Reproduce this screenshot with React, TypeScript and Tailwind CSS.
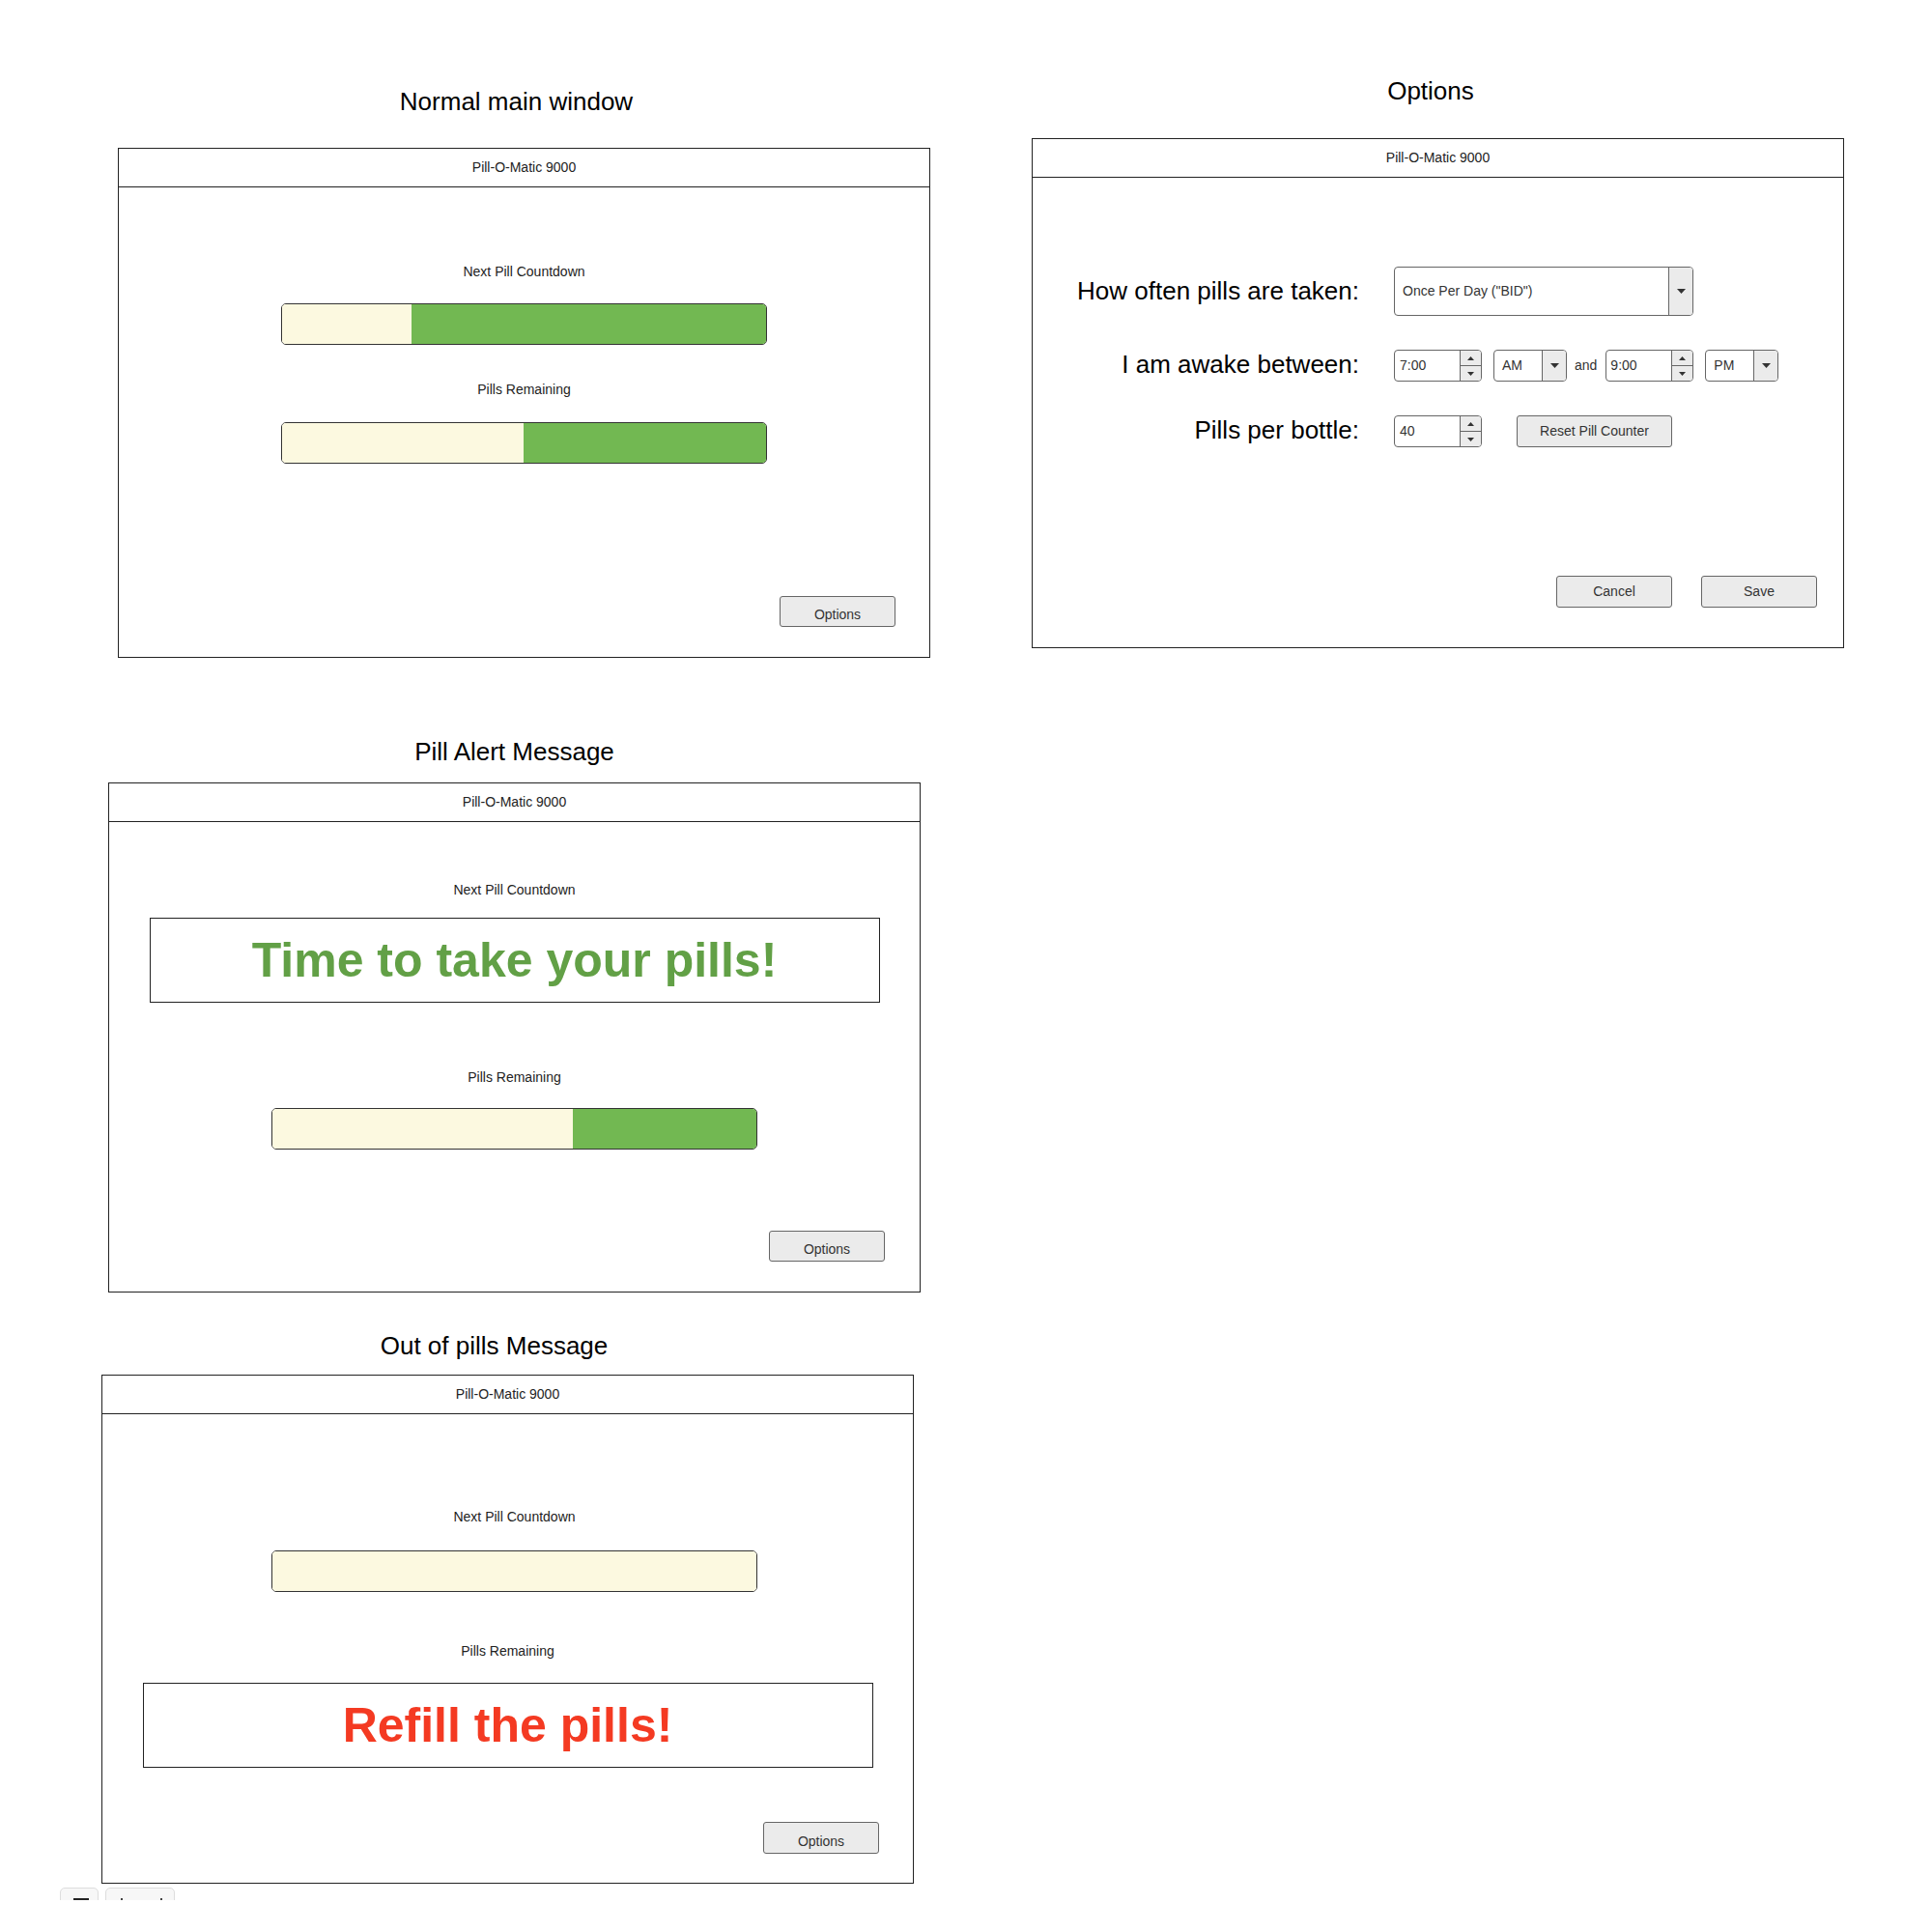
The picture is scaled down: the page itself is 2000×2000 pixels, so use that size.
import React from 'react';

const Tri = ({ up = false, size = 'sm' }: { up?: boolean; size?: 'sm' | 'md' }) => {
  const w = size === 'sm' ? 7 : 9;
  const h = size === 'sm' ? 4 : 5;
  return (
    <svg width={w} height={h} viewBox={`0 0 ${w} ${h}`}>
      <polygon points={up ? `0,${h} ${w},${h} ${w / 2},0` : `0,0 ${w},0 ${w / 2},${h}`} fill="#333" />
    </svg>
  );
};

const Bar = ({ cream, className = '' }: { cream: number; className?: string }) => (
  <div className={`flex h-[43px] w-[503px] overflow-hidden rounded-[5px] border border-[#333] ${className}`}>
    <div className="h-full bg-[#fcf9e0]" style={{ width: `${cream}px` }} />
    <div className="h-full flex-1 bg-[#72b852]" />
  </div>
);

const Label = ({ children, className = '' }: { children: React.ReactNode; className?: string }) => (
  <div className={`h-[20px] text-center text-[14px] leading-[20px] text-[#222] ${className}`}>{children}</div>
);

const Button = ({ children, className = '' }: { children: React.ReactNode; className?: string }) => (
  <div
    className={`flex h-[32px] w-[120px] items-center justify-center rounded-[3px] border border-[#666] bg-[#ebebeb] text-[14px] text-[#333] ${className}`}
  >
    {children}
  </div>
);

const OptionsButton = ({ className = '' }: { className?: string }) => (
  <div
    className={`flex h-[32px] w-[120px] items-center justify-center self-end rounded-[3px] border border-[#666] bg-[#ebebeb] pt-[7px] text-[14px] text-[#333] ${className}`}
  >
    Options
  </div>
);

const Window = ({ children, className = '' }: { children: React.ReactNode; className?: string }) => (
  <div className={`flex w-[841px] flex-col border border-[#222] bg-white ${className}`}>
    <div className="flex h-[40px] shrink-0 items-center justify-center border-b border-[#222] text-[14px] text-[#222]">
      Pill-O-Matic 9000
    </div>
    {children}
  </div>
);

const Title = ({ children, className = '' }: { children: React.ReactNode; className?: string }) => (
  <div className={`h-[30px] w-[841px] text-center text-[26px] leading-[30px] text-black ${className}`}>{children}</div>
);

const Spinner = ({ value, pad = 'pl-[5px]', className = '' }: { value: string; pad?: string; className?: string }) => (
  <div className={`flex h-[32px] w-[91px] overflow-hidden rounded-[4px] border border-[#666] bg-white ${className}`}>
    <div className={`flex flex-1 items-center text-[14px] text-[#333] ${pad}`}>{value}</div>
    <div className="flex w-[22px] flex-col border-l border-[#666] bg-[#ebebeb]">
      <div className="flex flex-1 items-center justify-center border-b border-[#666]">
        <Tri up />
      </div>
      <div className="flex flex-1 items-center justify-center">
        <Tri />
      </div>
    </div>
  </div>
);

const Select = ({ value, className = '' }: { value: string; className?: string }) => (
  <div className={`flex overflow-hidden rounded-[4px] border border-[#666] bg-white ${className}`}>
    <div className="flex flex-1 items-center pl-[8px] text-[14px] text-[#333]">{value}</div>
    <div className="flex w-[25px] items-center justify-center border-l border-[#666] bg-[#ebebeb]">
      <Tri size="md" />
    </div>
  </div>
);

const Message = ({ text, color }: { text: string; color: string }) => (
  <div className="mx-auto flex h-[88px] w-[756px] items-center justify-center border border-[#222]">
    <span className={`text-[50px] font-bold leading-none ${color}`}>{text}</span>
  </div>
);

export default function App() {
  return (
    <div className="flex h-[2000px] w-[2000px] overflow-hidden bg-white font-['Liberation_Sans',Arial,sans-serif]">
      {/* left column: main window and messages */}
      <div className="flex w-[1000px] flex-col pt-[90px]">
        <div className="ml-[122px]">
          <Title className="pr-[16px]">Normal main window</Title>
          <Window className="mt-[33px] h-[528px]">
            <Label className="mt-[77px]">Next Pill Countdown</Label>
            <Bar cream={134} className="mx-auto mt-[23px]" />
            <Label className="mt-[36px]">Pills Remaining</Label>
            <Bar cream={250} className="mx-auto mt-[24px]" />
            <OptionsButton className="mr-[35px] mt-[137px]" />
          </Window>
        </div>

        <div className="ml-[112px] mt-[82px]">
          <Title>Pill Alert Message</Title>
          <Window className="mt-[17px] h-[528px]">
            <Label className="mt-[60px]">Next Pill Countdown</Label>
            <div className="mt-[19px]">
              <Message text="Time to take your pills!" color="text-[#62a046]" />
            </div>
            <Label className="mt-[67px]">Pills Remaining</Label>
            <Bar cream={311} className="mx-auto mt-[22px]" />
            <OptionsButton className="mr-[36px] mt-[84px]" />
          </Window>
        </div>

        <div className="ml-[105px] mt-[40px]">
          <Title className="pr-[28px]">Out of pills Message</Title>
          <Window className="mt-[15px] h-[527px]">
            <div className="ml-[175px] mt-[96px] w-[503px]">
              <Label>Next Pill Countdown</Label>
              <Bar cream={501} className="mt-[25px]" />
            </div>
            <Label className="mt-[51px]">Pills Remaining</Label>
            <div className="mt-[23px]">
              <Message text="Refill the pills!" color="text-[#f43a22]" />
            </div>
            <OptionsButton className="mr-[35px] mt-[56px] h-[33px]" />
          </Window>
        </div>

        {/* page tabs, cut off at the bottom */}
        <div className="mt-[4px] flex h-[13px] gap-[7px] overflow-hidden pl-[62px]">
          <div className="relative h-[30px] w-[40px] rounded-t-[5px] border border-[#ddd] bg-[#f7f7f7]">
            <div className="absolute left-[13px] top-[10px] h-[3px] w-[16px] bg-[#222]" />
          </div>
          <div className="relative h-[30px] w-[72px] rounded-t-[5px] border border-[#ddd] bg-[#f7f7f7]">
            <div className="absolute left-[15px] top-[10px] h-[3px] w-[2px] bg-[#444]" />
            <div className="absolute left-[56px] top-[10px] h-[3px] w-[2px] bg-[#444]" />
          </div>
        </div>
      </div>

      {/* right column: options dialog */}
      <div className="flex flex-col pl-[68px] pt-[79px]">
        <Title className="pr-[15px]">Options</Title>
        <Window className="mt-[34px] h-[528px]">
          <div className="mt-[92px] flex h-[51px] items-center">
            <div className="w-[338px] text-right text-[26px] text-black">How often pills are taken:</div>
            <Select value={'Once Per Day ("BID")'} className="ml-[36px] h-[51px] w-[310px]" />
          </div>
          <div className="mt-[35px] flex h-[33px] items-center">
            <div className="-mt-[3px] w-[338px] text-right text-[26px] text-black">I am awake between:</div>
            <Spinner value="7:00" className="ml-[36px] h-[33px]" />
            <Select value="AM" className="ml-[12px] h-[33px] w-[76px]" />
            <span className="ml-[8px] text-[14px] text-[#333]">and</span>
            <Spinner value="9:00" pad="pl-[4px]" className="ml-[9px] h-[33px]" />
            <Select value="PM" className="ml-[12px] h-[33px] w-[76px]" />
          </div>
          <div className="mt-[35px] flex h-[33px] items-center">
            <div className="-mt-[3px] w-[338px] text-right text-[26px] text-black">Pills per bottle:</div>
            <Spinner value="40" className="ml-[36px] h-[33px]" />
            <Button className="ml-[36px] h-[33px] w-[161px]">Reset Pill Counter</Button>
          </div>
          <div className="mr-[27px] mt-[133px] flex justify-end gap-[30px]">
            <Button className="h-[33px]">Cancel</Button>
            <Button className="h-[33px]">Save</Button>
          </div>
        </Window>
      </div>
    </div>
  );
}
